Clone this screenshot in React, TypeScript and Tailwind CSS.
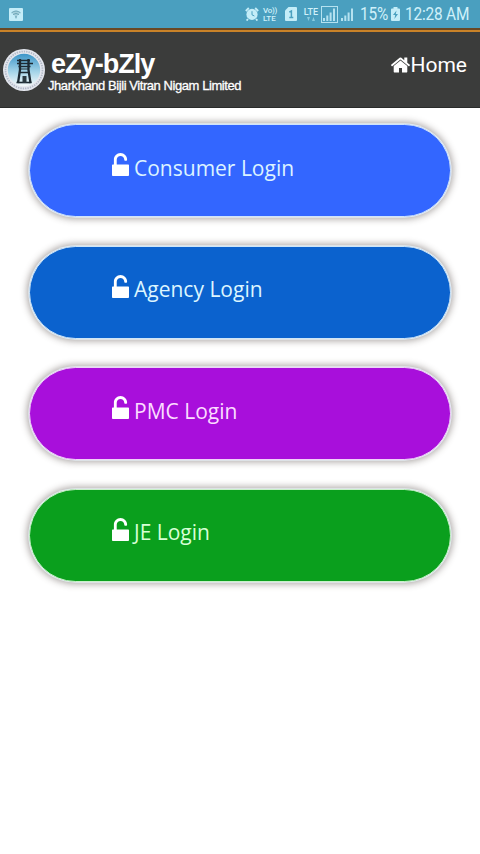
const logins = [
  { label: "Consumer Login", color: "bg-[#3366ff] border-[#cfe3fb]", text: "text-[#dcf3ff]" },
  { label: "Agency Login", color: "bg-[#0b62ce] border-[#cfe6f8]", text: "text-[#dcf5ff]" },
  { label: "PMC Login", color: "bg-[#a80fdb] border-[#f0d3f8]", text: "text-[#fbdcff]" },
  { label: "JE Login", color: "bg-[#0a9f1d] border-[#c9f2c9]", text: "text-[#d8ffd6]" },
];

const UnlockIcon = () => (
  <svg className="h-[23px] w-[17px] shrink-0" viewBox="320 0 1152 1536" preserveAspectRatio="none" fill="#fff">
    <path d="M1408 768c35 0 64 29 64 64v640c0 35-29 64-64 64H384c-35 0-64-29-64-64V832c0-35 29-64 64-64h64V448C448 201 649 0 896 0s448 201 448 448c0 35-29 64-64 64h-64c-35 0-64-29-64-64 0-141-115-256-256-256S640 307 640 448v320h768z" />
  </svg>
);

const HomeIcon = () => (
  <svg className="h-[16px] w-[19px] shrink-0" viewBox="90 253 1612 1283" fill="#fff">
    <path d="M1472 992v480q0 26-19 45t-45 19h-384v-384h-256v384h-384q-26 0-45-19t-19-45v-480q0-1 .5-3t.5-3l575-474 575 474q1 2 1 6zm223-69l-62 74q-8 9-21 11h-3q-13 0-21-7l-692-577-692 577q-12 8-24 7-13-2-21-11l-62-74q-8-10-7-23.5t11-21.5l719-599q32-26 76-26t76 26l244 204v-195q0-14 9-23t23-9h192q14 0 23 9t9 23v408l219 182q10 8 11 21.5t-7 23.5z" />
  </svg>
);

const WifiIcon = () => (
  <svg className="h-[13px] w-[14px]" viewBox="0 0 14 13">
    <rect width="14" height="13" rx="1" fill="#c4edf8" />
    <path d="M2.5 4.6q4.5-3.6 9 0L7 9z" fill="#a3cfdb" />
    <g fill="none" stroke="#6fa9ba">
      <path d="M2.5 4.8q4.5-3.6 9 0M4 6.6q3-2.4 6 0" />
    </g>
    <path d="M5.8 8.2h2.4L7 11z" fill="#6fa9ba" />
  </svg>
);

const AlarmIcon = () => (
  <svg className="h-[14px] w-[14px]" viewBox="0 0 14 14">
    <circle cx="7" cy="7.4" r="5.6" fill="#c4edf8" />
    <path d="M.8 4L3.8 1M13.2 4l-3-3M3 12l-1.4 1.6M11 12l1.4 1.6" stroke="#c4edf8" strokeWidth="1.8" />
    <path d="M7 4.2v3.6l2.4 1.2" fill="none" stroke="#4aa0bf" />
  </svg>
);

const SimIcon = () => (
  <svg className="h-[14px] w-[12px]" viewBox="0 0 12 14">
    <path d="M3.5 0H11q1 0 1 1v12q0 1-1 1H1q-1 0-1-1V3.5z" fill="#c4edf8" />
    <path d="M4.3 5.2L6.4 4v6.5M4.3 10.5h4" fill="none" stroke="#4aa0bf" strokeWidth="1.5" />
  </svg>
);

const SignalIcon = ({ boxed = false }: { boxed?: boolean }) => (
  <svg className="h-[17px] w-[17px]" viewBox="0 0 17 17">
    {boxed && <rect x=".5" y=".5" width="16" height="16" fill="none" stroke="#b5e2f0" />}
    <g fill="#b5e2f0">
      <rect x="2" y="12" width="2" height="3" />
      <rect x="5.3" y="9.5" width="2" height="5.5" />
      <rect x="8.6" y="6.5" width="2" height="8.5" />
      <rect x="12" y="2.5" width="2" height="12.5" />
    </g>
  </svg>
);

const BatteryIcon = () => (
  <svg className="h-[14px] w-[9px]" viewBox="0 0 9 14">
    <path d="M2.5 0h4v1.5H8q1 0 1 1V13q0 1-1 1H1q-1 0-1-1V2.5q0-1 1-1h1.5z" fill="#c4edf8" />
    <path d="M5.5 3.5L2 8h2.2l-.8 4L7 7H4.8z" fill="#4aa0bf" />
  </svg>
);

const Logo = () => (
  <svg className="h-[42px] w-[42px] shrink-0" viewBox="0 0 42 42">
    <defs>
      <linearGradient id="sky" x2="0" y2="1">
        <stop stopColor="#3c95c8" />
        <stop offset=".55" stopColor="#a4d4e8" />
        <stop offset="1" stopColor="#f5fafa" />
      </linearGradient>
    </defs>
    <circle cx="21" cy="21" r="21" fill="#e4e7ee" />
    <circle cx="21" cy="21" r="18.5" fill="none" stroke="#b3bac8" strokeWidth="1.8" strokeDasharray="1.4 1" />
    <circle cx="21" cy="21" r="16.2" fill="url(#sky)" />
    <g fill="none" stroke="#1d2a33">
      <path d="M14 11.5h13M14 14.5h16M15.5 17.5h12M16 23.5h10" strokeWidth="1.6" />
      <path d="M17 10v11L15 34M25.5 10v11L27.5 34" strokeWidth="2.3" />
      <path d="M16.5 20h9" strokeWidth="1" />
      <path d="M13.5 33.5h15" strokeWidth="1.6" />
    </g>
    <path d="M19.5 27h4v7h-4z" fill="#2b3940" />
  </svg>
);

const StatusBar = () => (
  <div className="flex h-7 items-center bg-[#4a9fbf] pl-[9px] font-['Roboto',sans-serif] text-[#d0f1fa]">
    <WifiIcon />
    <div className="ml-[222px] flex h-7 items-center">
      <AlarmIcon />
      <div className="ml-[4px] w-[15px] text-[8px] font-medium">
        <div className="h-[7px] leading-[7px] tracking-[-0.3px]">Vo))</div>
        <div className="h-[8px] leading-[9px]">LTE</div>
      </div>
      <div className="ml-[7px]"><SimIcon /></div>
      <div className="ml-[6px] flex w-[16px] flex-col items-center">
        <span className="text-[9px] leading-[10px] font-medium">LTE</span>
        <svg className="h-[4px] w-[8px]" viewBox="0 0 8 4" fill="#8accdf">
          <path d="M0 0h3L1.5 4zM5 4h3L6.5 0z" />
        </svg>
      </div>
      <div className="ml-[2px]"><SignalIcon boxed /></div>
      <div className="ml-px"><SignalIcon /></div>
      <span className="ml-[4px] w-[28px] origin-left scale-x-[0.88] text-[17.5px] tracking-[-0.2px]">15%</span>
      <div className="ml-[3px]"><BatteryIcon /></div>
      <span className="ml-[5px] origin-left scale-x-[0.88] text-[17.5px] tracking-[-0.2px] whitespace-nowrap">
        12:28 AM
      </span>
    </div>
  </div>
);

const Header = () => (
  <header className="flex h-[80px] border-t-[2px] border-b border-t-[#694824] border-b-[#292b2a] bg-[#3b3c3b] text-white">
    <div className="flex w-full border-t-[2px] border-[#c98228] pl-[3px]">
      <div className="pt-[17px]"><Logo /></div>
      <div className="ml-[3px] pt-[17px] font-['Liberation_Sans',sans-serif] whitespace-nowrap">
        <h1 className="pl-[3px] text-[27px] leading-[30px] font-bold tracking-[-0.95px]">eZy-bZly</h1>
        <p className="text-[13px] leading-[14px] tracking-[-0.43px] [-webkit-text-stroke:0.3px_#fff]">
          Jharkhand Bijli Vitran Nigam Limited
        </p>
      </div>
      <a className="mr-[13px] ml-auto flex items-start pt-[20px] font-['Roboto',sans-serif] text-[21px] leading-[26px]">
        <div className="pt-[5px]"><HomeIcon /></div>
        <span>Home</span>
      </a>
    </div>
  </header>
);

const App = () => (
  <div className="min-h-[854px] w-[480px] overflow-hidden bg-white">
    <StatusBar />
    <Header />
    <main className="flex flex-col gap-[28.5px] px-[29px] pt-[16px]">
      {logins.map(({ label, color, text }) => (
        <button
          key={label}
          className={`flex h-[93px] w-[422px] items-start rounded-full border pt-[28px] pl-[82px] shadow-[0_0_0_0.7px_#e3ebf2,0_0_7px_2px_rgba(80,70,65,0.48)] ${color}`}
        >
          <UnlockIcon />
          <span
            className={`ml-[5px] pt-[0.5px] text-left font-['Open_Sans',sans-serif] text-[21px] leading-[28px] whitespace-nowrap ${text}`}
          >
            {label}
          </span>
        </button>
      ))}
    </main>
  </div>
);

export default App;
